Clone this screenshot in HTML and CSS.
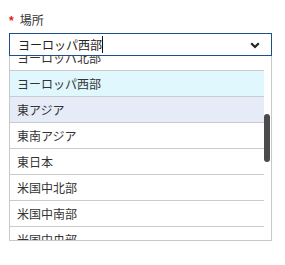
FILE: index.html
```html
<!DOCTYPE html>
<html lang="ja">
<head>
<meta charset="utf-8">
<link rel="stylesheet" href="styles.css">
</head>
<body>
<div class="field">
  <div class="label"><span class="req">*</span>場所</div>
  <div class="combo">
    <span class="value">ヨーロッパ西部</span><span class="caret"></span>
    <svg class="chev" width="10" height="7" viewBox="0 0 10 7"><path d="M1.2 1.3 L5 5 L8.8 1.3" fill="none" stroke="#222" stroke-width="2.2"/></svg>
  </div>
  <div class="dropdown">
    <div class="viewport">
      <ul class="list">
        <li>ヨーロッパ北部</li>
        <li class="sel">ヨーロッパ西部</li>
        <li class="hover">東アジア</li>
        <li>東南アジア</li>
        <li>東日本</li>
        <li>米国中北部</li>
        <li>米国中南部</li>
        <li>米国中央部</li>
      </ul>
    </div>
    <div class="track"><div class="thumb"></div></div>
  </div>
</div>
</body>
</html>
```
FILE: styles.css
```css
html, body { margin: 0; padding: 0; background: #fff; }
body {
  font-family: "Noto Sans CJK JP", "Noto Sans", sans-serif;
  font-size: 12px;
  color: #333;
}
.field { padding: 12px 0 0 9px; width: 263px; }
.label { height: 16px; line-height: 16px; margin-bottom: 5px; color: #333; }
.req { color: #e0201b; font-family: "Liberation Sans", sans-serif; font-weight: bold; margin-right: 6px; }
.combo {
  box-sizing: border-box;
  height: 23px;
  border: 1px solid #1d4f8f;
  display: flex;
  align-items: center;
  padding: 0 11px 0 8px;
  color: #222;
  font-size: 12px;
}
.value { line-height: 21px; }
.caret { width: 1px; height: 17px; background: #111; }
.chev { margin-left: auto; margin-top: 1px; }
.dropdown {
  box-sizing: border-box;
  height: 185px;
  border: 1px solid #c8c8c8;
  border-top: none;
  display: flex;
}
.viewport { flex: 1; overflow: hidden; height: 184px; }
.list { list-style: none; margin: -11px 0 0; padding: 0; }
.list li {
  height: 25px;
  line-height: 25px;
  border-bottom: 1px solid #cbcbcb;
  padding-left: 7px;
  color: #333;
}
.list li.sel { background: #e0f7fd; }
.list li.hover { background: #e6ecf7; }
.track { width: 7px; }
.thumb {
  width: 6px;
  height: 48px;
  margin-top: 58px;
  background: #4b4b4b;
  border-radius: 3px;
}
```
